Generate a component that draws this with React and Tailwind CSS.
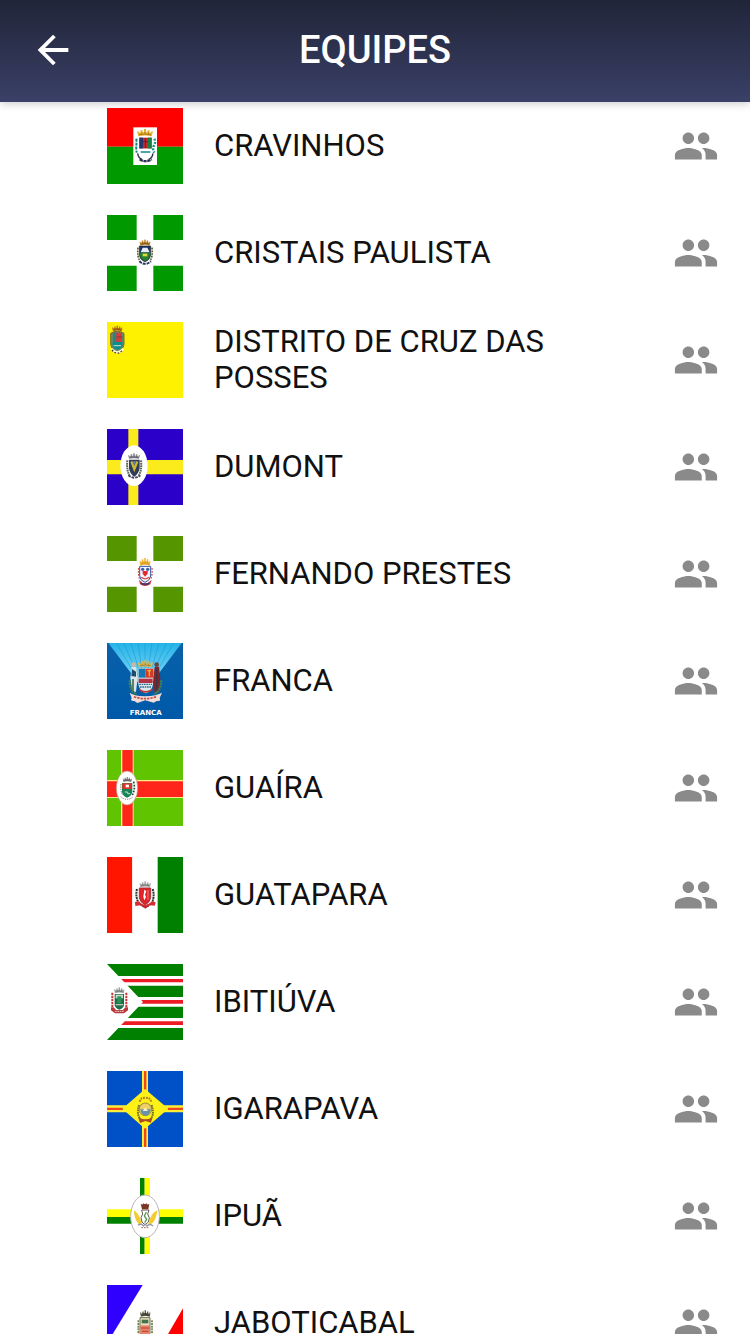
import React from "react";
import { MdArrowBack, MdPeople } from "react-icons/md";

function Flag({ children }) {
  return (
    <svg viewBox="0 0 228 228" className="size-19 shrink-0" aria-hidden="true">
      {children}
    </svg>
  );
}

// mural crown, drawn in a 46x26 area
function Crown({ x, y, w = 46, h = 26, color = "#e0a82e", dark = "#8a5a14" }) {
  return (
    <svg x={x} y={y} width={w} height={h} viewBox="0 0 46 26" preserveAspectRatio="none">
      <path
        d="M4 24 0 9h5l1 4 4-1V5h6v6h4V1h6v10h4V5h6v7l4 1 1-4h5l-4 15Q23 19 4 24Z"
        fill={color}
      />
      <path d="M6 19Q23 14 40 19M13 12v4M23 10v5M33 12v4" fill="none" stroke={dark} strokeWidth="2" />
    </svg>
  );
}

function Cross({ color }) {
  return (
    <path
      d="M0 0H89V75H0ZM139 0H228V75H139ZM0 152H89V228H0ZM139 152H228V228H139Z"
      fill={color}
    />
  );
}

function Cravinhos() {
  return (
    <Flag>
      <path d="M0 0H228V116H0Z" fill="#fe0000" />
      <path d="M0 116H228V228H0Z" fill="#009a00" />
      <path d="M79 58H150V171H79Z" fill="#fff" />
      <Crown x={90} y={62} w={48} h={25} color="#e8b02c" />
      <path d="M97 89H134V122H97Z" fill="#c52a31" />
      <path d="M97 89H108V122H97Z" fill="#27366f" />
      <path d="M123 89H134V122H123Z" fill="#16803d" />
      <path d="M108 101H123M115 90V120" stroke="#6d1d2e" strokeWidth="3" />
      <path d="M95 122H136V142Q132 155 115 158Q98 154 95 142Z" fill="#fff" />
      <path d="M101 132H130" stroke="#24939a" strokeWidth="5" />
      <path d="M88 92Q89 102 88 112T89 134" fill="none" stroke="#0d8478" strokeWidth="6" strokeDasharray="9 3" />
      <path d="M142 92Q147 102 141 112T142 134" fill="none" stroke="#0d9488" strokeWidth="7" strokeDasharray="6 4" />
      <path d="M92 136Q94 150 105 154M138 136Q136 150 125 154" fill="none" stroke="#263052" strokeWidth="4" />
      <path d="M98 154Q115 165 134 154" fill="none" stroke="#263052" strokeWidth="7" strokeDasharray="10 2" />
    </Flag>
  );
}

function Cristais() {
  return (
    <Flag>
      <Cross color="#009a00" />
      <Crown x={97} y={73} w={34} h={20} color="#b98224" dark="#5d3612" />
      <path d="M97 93H131V118Q129 136 114 140Q99 136 97 118Z" fill="#1c3263" stroke="#222" strokeWidth="2" />
      <path d="M101 112 107 98H121L128 112Z" fill="#e8edf5" />
      <path d="M98 113H130Q129 133 114 138Q100 133 98 113Z" fill="#23822e" />
      <path d="M107 116H121V124H107Z" fill="#e2d843" />
      <path d="M93 98Q90 125 99 138M135 98Q138 125 129 138" fill="none" stroke="#555b31" strokeWidth="5" strokeDasharray="5 3" />
      <path d="M97 139Q114 154 132 139" fill="none" stroke="#27335c" strokeWidth="6" strokeDasharray="9 3" />
    </Flag>
  );
}

function CruzDasPosses() {
  return (
    <Flag>
      <path d="M0 0H228V228H0Z" fill="#fff200" />
      <Crown x={15} y={10} w={32} h={19} color="#b9731f" dark="#683913" />
      <path d="M11 34Q31 21 51 34V67Q48 84 31 90Q14 84 11 67Z" fill="#5e8b6f" stroke="#7c6a28" strokeWidth="3" />
      <path d="M18 32H45V60H18Z" fill="#d93b3a" />
      <path d="M18 32H28V60H18Z" fill="#378078" />
      <path d="M29 45H46" stroke="#7e3a2c" strokeWidth="3" />
      <path d="M17 60H46V70Q43 80 31 83Q18 79 17 70Z" fill="#078e91" />
      <path d="M20 71H42" stroke="#cde4cf" strokeWidth="3" />
      <path d="M13 80Q31 102 49 80" fill="none" stroke="#fffbd0" strokeWidth="7" />
      <path d="M15 84Q31 103 47 84" fill="none" stroke="#3c351c" strokeWidth="4" strokeDasharray="5 5" />
    </Flag>
  );
}

function Dumont() {
  return (
    <Flag>
      <path d="M0 0H228V228H0Z" fill="#2b00c8" />
      <path d="M64 0H94V93H228V136H94V228H64V136H0V93H64Z" fill="#fbea1c" />
      <ellipse cx="81" cy="110" rx="41" ry="61" fill="#fff" />
      <Crown x={63} y={72} w={36} h={19} color="#8c8d94" dark="#3f4250" />
      <path d="M66 92H98V118Q94 137 82 143Q69 137 66 118Z" fill="#303d59" />
      <path d="M70 99 82 130 94 99 88 96 82 110 76 96Z" fill="#cdb634" />
      <path d="M76 97H88L82 109Z" fill="#5f83a8" />
      <path d="M61 94Q58 125 68 140M102 94Q105 125 95 140" fill="none" stroke="#5c6555" strokeWidth="6" strokeDasharray="5 2" />
      <path d="M64 139Q82 153 100 139" fill="none" stroke="#46445a" strokeWidth="6" strokeDasharray="8 3" />
    </Flag>
  );
}

function FernandoPrestes() {
  return (
    <Flag>
      <Cross color="#559600" />
      <Crown x={97} y={65} w={34} h={26} color="#f0b52e" dark="#c9831d" />
      <path d="M98 91H131V120Q128 135 114 139Q100 135 98 120Z" fill="#f4f4fb" stroke="#3850a2" strokeWidth="3" />
      <circle cx="107" cy="100" r="5" fill="#445aa8" />
      <circle cx="122" cy="100" r="5" fill="#445aa8" />
      <path d="M107 105H122V113L114 122 107 113Z" fill="#e8272d" />
      <path d="M103 124Q114 133 126 124" fill="none" stroke="#da4a4b" strokeWidth="4" />
      <path d="M95 96Q93 116 98 130M135 96Q137 116 131 130" fill="none" stroke="#c2504d" strokeWidth="4" strokeDasharray="5 4" />
      <path d="M96 131Q114 153 134 131L130 145Q114 155 99 145Z" fill="#c13245" />
      <path d="M103 142Q114 147 126 142" fill="none" stroke="#303873" strokeWidth="4" />
    </Flag>
  );
}

function Franca() {
  return (
    <Flag>
      <defs>
        <linearGradient id="sky" x1="0" y1="0" x2="0" y2="1">
          <stop offset="0" stopColor="#25b3e8" />
          <stop offset="1" stopColor="#9ee3fb" />
        </linearGradient>
        <linearGradient id="field" x1="0" y1="0" x2="0" y2="1">
          <stop offset="0" stopColor="#0861a8" />
          <stop offset="1" stopColor="#0059a8" />
        </linearGradient>
      </defs>
      <path d="M0 0H228V228H0Z" fill="url(#field)" />
      <path d="M4 0H224L114 146Z" fill="url(#sky)" />
      <path
        d="M28 0 114 146 50 0M72 0 114 146 93 0M114 0V146L135 0M156 0 114 146 178 0M200 0 114 146"
        fill="none"
        stroke="#1795cf"
        strokeWidth="1.5"
      />
      <Crown x={92} y={50} w={46} h={25} color="#dfb94d" dark="#806a34" />
      <path d="M94 76H138V122Q136 144 116 151Q97 144 94 122Z" fill="#dce8ef" />
      <path d="M95 77H115V104H95Z" fill="#1477b4" />
      <path d="M115 77H138V104H115Z" fill="#d33a27" />
      <path d="M121 83H132M127 80V100" stroke="#efb43d" strokeWidth="4" />
      <path d="M95 107H137V120H95Z" fill="#b43342" />
      <path d="M97 124H135M99 132H133" stroke="#346b8d" strokeWidth="4" strokeDasharray="5 2" />
      <path d="M96 139Q115 154 136 139" fill="none" stroke="#c23634" strokeWidth="5" />
      <circle cx="80" cy="65" r="7" fill="#c8b8a3" />
      <path d="M74 72H87L92 104 87 146H76L70 104Z" fill="#dae5e8" />
      <path d="M75 78 87 86V101L73 99Z" fill="#1d4b6d" />
      <path d="M78 108V148" stroke="#436b5b" strokeWidth="5" />
      <circle cx="149" cy="65" r="7" fill="#63473d" />
      <path d="M143 72H156L160 106 156 148H142L139 104Z" fill="#7d252d" />
      <path d="M149 77V147" stroke="#403443" strokeWidth="4" />
      <path d="M69 112Q66 142 89 154M162 112Q164 142 140 154" fill="none" stroke="#3f8052" strokeWidth="7" strokeDasharray="6 2" />
      <path d="M68 149Q78 158 114 160 151 158 165 149L158 165Q163 176 149 174L140 179 115 172 91 180 82 174Q68 175 74 165Z" fill="#f3ddd7" />
      <path d="M81 161Q114 173 149 161" fill="none" stroke="#c64948" strokeWidth="5" strokeDasharray="7 3" />
      <text x="116" y="216" textAnchor="middle" fill="#fff" className="font-['DejaVu_Sans',sans-serif] text-[21px] font-bold">
        FRANCA
      </text>
    </Flag>
  );
}

function Guaira() {
  return (
    <Flag>
      <path d="M0 0H228V228H0Z" fill="#60c400" />
      <path d="M42 0H80V90H228V144H80V228H42V144H0V90H42Z" fill="#ffe98d" />
      <path d="M46 0H77V94H228V141H77V228H46V141H0V94H46Z" fill="#ff251b" />
      <ellipse cx="60" cy="114" rx="32" ry="51" fill="#fff" stroke="#b98e79" strokeWidth="2" />
      <Crown x={47} y={80} w={28} h={17} color="#868686" dark="#393939" />
      <path d="M45 99H76V126Q74 138 60 143Q47 138 45 126Z" fill="#168459" />
      <path d="M46 100H75V117H46Z" fill="#df3428" />
      <path d="M56 104H66V112H56Z" fill="#fff" />
      <path d="M53 126H62V131H69" fill="none" stroke="#c5e1cb" strokeWidth="3" />
      <path d="M80 95Q86 119 75 137" fill="none" stroke="#263e32" strokeWidth="5" strokeDasharray="5 4" />
      <path d="M42 102Q40 124 47 136" fill="none" stroke="#67806b" strokeWidth="3" strokeDasharray="4 3" />
      <path d="M41 140Q60 156 79 140" fill="none" stroke="#a17267" strokeWidth="3" strokeDasharray="4 3" />
    </Flag>
  );
}

function Guatapara() {
  return (
    <Flag>
      <path d="M0 0H76V228H0Z" fill="#ff1500" />
      <path d="M76 0H152V228H76Z" fill="#fff" />
      <path d="M152 0H228V228H152Z" fill="#008000" />
      <Crown x={97} y={72} w={35} h={20} color="#aaa" dark="#555" />
      <path d="M97 93H131V122Q128 138 114 143Q100 137 97 122Z" fill="#e32227" stroke="#a1353c" strokeWidth="3" />
      <path d="M112 98 118 102 114 113 117 120 112 130 109 119Z" fill="#fff" />
      <path d="M123 99V128" stroke="#f17d79" strokeWidth="3" />
      <path d="M90 96Q84 120 96 139M137 96Q144 120 134 139" fill="none" stroke="#303131" strokeWidth="6" strokeDasharray="6 2" />
      <path d="M84 135 94 133Q114 153 136 133L146 136 143 146 129 145 115 155 101 145 85 147Z" fill="#d92b31" />
      <path d="M99 143Q115 157 131 143" fill="none" stroke="#762028" strokeWidth="3" strokeDasharray="5 3" />
    </Flag>
  );
}

function Ibitiuva() {
  return (
    <Flag>
      <clipPath id="chevron">
        <path d="M0 0H228V228H0L108 114Z" />
      </clipPath>
      <g clipPath="url(#chevron)">
        <path d="M0 0H228V36H0ZM0 65H228V99H0ZM0 128H228V162H0ZM0 192H228V228H0Z" fill="#008000" />
        <path d="M0 45H228V55H0ZM0 108H228V119H0ZM0 172H228V183H0Z" fill="#ed1c24" />
      </g>
      <Crown x={21} y={69} w={32} h={20} color="#a3a7a3" dark="#4f5850" />
      <path d="M23 90H51V124Q48 134 37 137Q26 134 23 124Z" fill="#1c6d48" />
      <path d="M26 92H48V103H26Z" fill="#c9d8c9" />
      <path d="M31 97H43V118H31Z" fill="#2a935c" />
      <path d="M26 122H49" stroke="#b9c8b9" strokeWidth="4" />
      <path d="M16 86V130M58 86V130" stroke="#c6393a" strokeWidth="6" strokeDasharray="7 2" />
      <path d="M12 130H20L27 138H48L55 130H63V139L51 148H24L12 139Z" fill="#b9383b" />
      <path d="M24 142H51" stroke="#f1d0cd" strokeWidth="3" strokeDasharray="5 2" />
    </Flag>
  );
}

function Igarapava() {
  return (
    <Flag>
      <path d="M0 0H228V228H0Z" fill="#0050c8" />
      <path d="M105 0H123V103H228V124H123V228H105V124H0V103H105Z" fill="#ffee38" />
      <path d="M111 0H118V58H111ZM111 170H118V228H111ZM0 110H48V117H0ZM182 110H228V117H182Z" fill="#f0461e" />
      <path d="M114 54 184 113 114 173 46 113Z" fill="#fff018" />
      <path d="M99 92Q99 80 115 80 131 80 132 92" fill="none" stroke="#a87a25" strokeWidth="6" strokeDasharray="5 3" />
      <circle cx="115" cy="115" r="19" fill="#dbc06c" stroke="#796c36" strokeWidth="2" />
      <path d="M101 107Q115 89 130 107L126 117H104Z" fill="#f1cf67" />
      <path d="M100 115H131Q129 133 115 135Q102 131 100 115Z" fill="#6a91aa" />
      <path d="M107 120 115 109 123 120Z" fill="#f7efc7" />
      <path d="M96 102Q87 133 103 147M134 102Q144 133 128 147" fill="none" stroke="#6e762a" strokeWidth="6" strokeDasharray="5 2" />
      <path d="M94 140Q115 149 136 140L132 155 115 150 99 156Z" fill="#a94a22" />
    </Flag>
  );
}

function Ipua() {
  return (
    <Flag>
      <path d="M99 0H113V228H99Z" fill="#008000" />
      <path d="M113 0H129V228H113Z" fill="#ffff00" />
      <path d="M0 94H228V117H0Z" fill="#ffff00" />
      <path d="M0 117H228V137H0Z" fill="#008000" />
      <ellipse cx="114" cy="115" rx="43" ry="64" fill="#fff" stroke="#b9b4bd" strokeWidth="3" />
      <path d="M101 77 106 80 109 76 114 79 119 76 122 80 127 77 124 94H105Z" fill="#7a3525" />
      <path d="M80 97Q92 104 99 120L106 141Q85 142 80 97ZM151 97Q136 104 130 120L123 141Q146 139 151 97Z" fill="#f2cc31" />
      <path d="M104 96H126L122 108Q131 120 124 132L114 141 105 132Q98 118 107 108Z" fill="#fff" stroke="#635b4d" strokeWidth="3" />
      <path d="M118 102 112 114 119 124 113 134" fill="none" stroke="#559850" strokeWidth="4" />
      <path d="M93 142Q102 135 110 144L114 138 120 144Q128 135 138 144" fill="none" stroke="#9894a3" strokeWidth="4" />
      <path d="M103 149H126" stroke="#a56b52" strokeWidth="3" strokeDasharray="5 3" />
    </Flag>
  );
}

function Jaboticabal() {
  return (
    <Flag>
      <path d="M0 0H107L0 175Z" fill="#3000ff" />
      <path d="M228 70V228H136Z" fill="#fe0000" />
      <Crown x={99} y={75} w={32} h={22} color="#5b5845" dark="#24291f" />
      <path d="M99 98H129V144Q126 158 114 162Q102 158 99 144Z" fill="#eadfc2" stroke="#69704f" strokeWidth="3" />
      <path d="M104 104H124V115H104Z" fill="#41744a" />
      <path d="M100 121H129V148H100Z" fill="#e98168" />
      <path d="M101 129H128M105 139H124" stroke="#b93e32" strokeWidth="3" />
      <path d="M94 106V154M135 106V154" stroke="#70834e" strokeWidth="5" strokeDasharray="6 2" />
      <path d="M91 151Q114 171 140 151L136 165Q114 178 94 165Z" fill="#c65045" />
    </Flag>
  );
}

const teams = [
  { name: "CRAVINHOS", flag: <Cravinhos /> },
  { name: "CRISTAIS PAULISTA", flag: <Cristais /> },
  { name: "DISTRITO DE CRUZ DAS POSSES", flag: <CruzDasPosses /> },
  { name: "DUMONT", flag: <Dumont /> },
  { name: "FERNANDO PRESTES", flag: <FernandoPrestes /> },
  { name: "FRANCA", flag: <Franca /> },
  { name: "GUAÍRA", flag: <Guaira /> },
  { name: "GUATAPARA", flag: <Guatapara /> },
  { name: "IBITIÚVA", flag: <Ibitiuva /> },
  { name: "IGARAPAVA", flag: <Igarapava /> },
  { name: "IPUÃ", flag: <Ipua /> },
  { name: "JABOTICABAL", flag: <Jaboticabal /> },
];

function TeamRow({ team }) {
  return (
    <li>
      <button type="button" className="flex h-19 w-full items-center pl-[107px] pr-[31px] text-left">
        {team.flag}
        <span className="ml-[31px] mr-20 flex-1 text-[31px] leading-9 text-[#111]">
          {team.name}
        </span>
        <MdPeople className="size-[46px] shrink-0 text-[#8a8a8a]" aria-hidden="true" />
      </button>
    </li>
  );
}

export default function App() {
  return (
    <div className="flex h-screen flex-col bg-white font-[Roboto,sans-serif]">
      <header className="z-10 grid shrink-0 grid-cols-[1fr_auto_1fr] items-center bg-linear-to-b from-[#212539] to-[#3a4067] px-[30px] pt-6 pb-[26px] shadow-[0_2px_8px_rgba(0,0,0,0.2)]">
        <button type="button" aria-label="Voltar" className="size-[46px] text-white">
          <MdArrowBack className="size-full" aria-hidden="true" />
        </button>
        <h1 className="text-[38px] leading-[52px] font-medium text-white">EQUIPES</h1>
      </header>
      <main className="min-h-0 flex-1 overflow-y-auto [scrollbar-width:none]">
        <ul className="flex flex-col gap-[31px] py-1.5">
          {teams.map((team) => (
            <TeamRow key={team.name} team={team} />
          ))}
        </ul>
      </main>
    </div>
  );
}
